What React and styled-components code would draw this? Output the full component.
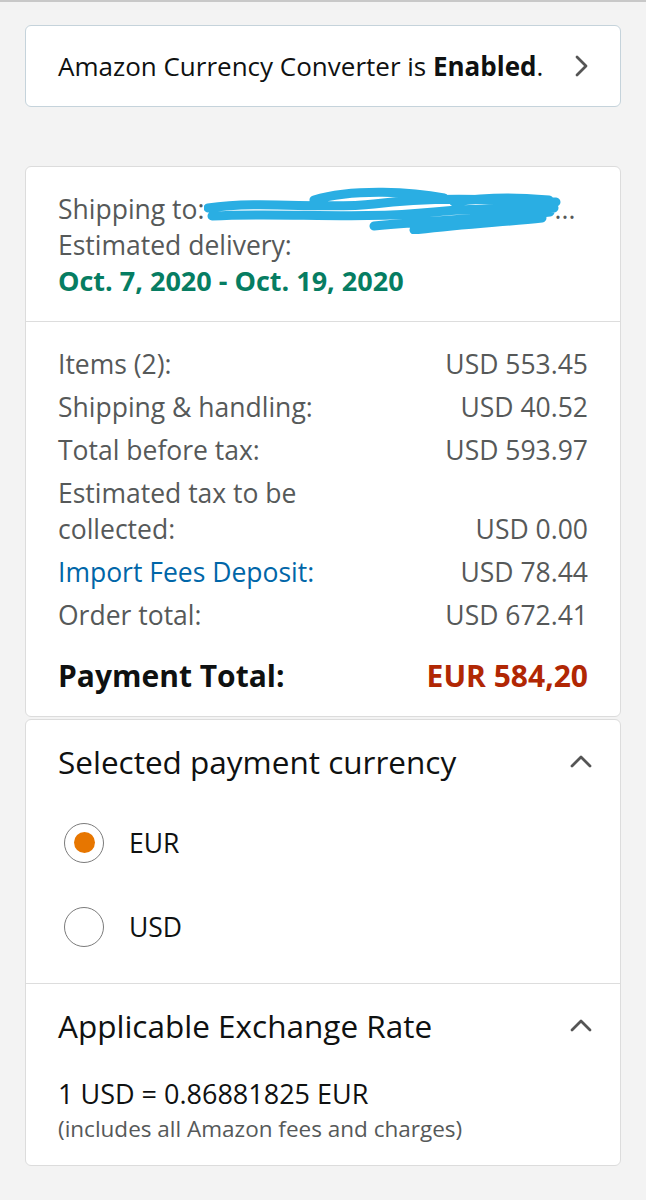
import React, { useState } from 'react';
import styled, { createGlobalStyle } from 'styled-components';

const GlobalStyle = createGlobalStyle`
  html, body {
    margin: 0;
    padding: 0;
    background: #f3f3f3;
  }
  body {
    font-family: "Open Sans", Roboto, Arial, sans-serif;
    color: #0f1111;
    -webkit-font-smoothing: antialiased;
  }
`;

const Page = styled.div`
  border-top: 2px solid #c8c8c8;
  padding: 23px 25px 34px;
  display: flex;
  flex-direction: column;
`;

const BannerCard = styled.div`
  background: #fff;
  border: 1.5px solid #c5d3db;
  border-radius: 6px;
  height: 82px;
  box-sizing: border-box;
  padding: 0 28px 0 32px;
  display: flex;
  align-items: center;
  justify-content: space-between;
  font-size: 26px;
  margin-bottom: 59px;
`;

const Card = styled.div`
  background: #fff;
  border: 1.5px solid #dcdcdc;
  border-radius: 6px;
  margin-bottom: ${(p) => p.$gap || 0}px;
`;

const Section = styled.div`
  padding: ${(p) => p.$pad || '0 32px'};
  border-top: ${(p) => (p.$divider ? '1.5px solid #dddddd' : 'none')};
`;

const GrayLine = styled.div`
  color: #565959;
  font-size: 26.5px;
  line-height: 35.5px;
  position: relative;
`;

const DeliveryDate = styled.div`
  color: #067d62;
  font-weight: 700;
  font-size: 27px;
  line-height: 35.5px;
`;

const Row = styled.div`
  display: flex;
  justify-content: space-between;
  align-items: flex-end;
  color: #565959;
  font-size: 26.5px;
  line-height: 36px;
  margin-bottom: 7px;
`;

const Label = styled.span`
  color: ${(p) => (p.$link ? '#0066a8' : 'inherit')};
  max-width: ${(p) => p.$narrow || 'none'};
`;

const Amount = styled.span`
  white-space: nowrap;
`;

const TotalRow = styled.div`
  display: flex;
  justify-content: space-between;
  align-items: center;
  font-size: 30px;
  line-height: 40px;
  font-weight: 700;
  margin-top: 23px;
  color: #0f1111;
`;

const TotalAmount = styled.span`
  color: #b12704;
`;

const Header = styled.div`
  display: flex;
  justify-content: space-between;
  align-items: center;
  font-size: 31.5px;
  line-height: 40px;
  color: #0f1111;
`;

const RadioList = styled.div`
  display: flex;
  flex-direction: column;
  gap: 42px;
  margin-top: 40px;
`;

const RadioRow = styled.label`
  display: flex;
  align-items: center;
  gap: 25px;
  font-size: 26.5px;
  color: #0f1111;
  height: 42px;
  margin-left: 6px;
  cursor: pointer;
`;

const RadioCircle = styled.span`
  width: 40px;
  height: 40px;
  border-radius: 50%;
  border: 1.5px solid #7b7b7b;
  box-sizing: border-box;
  display: flex;
  align-items: center;
  justify-content: center;
  &::after {
    content: '';
    width: 21px;
    height: 21px;
    border-radius: 50%;
    background: ${(p) => (p.$checked ? '#e77600' : 'transparent')};
  }
`;

const RateBlock = styled.div`
  margin-top: 31px;
`;

const RateLine = styled.div`
  font-size: 27px;
  color: #0f1111;
  line-height: 34px;
`;

const RateNote = styled.div`
  font-size: 22.5px;
  color: #565959;
  line-height: 36px;
`;

const Scribble = styled.svg`
  position: absolute;
  left: 146px;
  top: -6px;
`;

const Dots = styled.span`
  margin-left: 350px;
`;

const Chevron = ({ dir = 'right' }) => (
  <svg width="22" height="22" viewBox="0 0 22 22">
    <path
      d={dir === 'right' ? 'M7 2 L16 11 L7 20' : 'M2 15 L11 6 L20 15'}
      fill="none"
      stroke="#555"
      strokeWidth="2.8"
      strokeLinecap="round"
      strokeLinejoin="round"
    />
  </svg>
);

const rows = [
  { label: 'Items (2):', amount: 'USD 553.45' },
  { label: 'Shipping & handling:', amount: 'USD 40.52' },
  { label: 'Total before tax:', amount: 'USD 593.97' },
  { label: 'Estimated tax to be collected:', amount: 'USD 0.00', narrow: '270px' },
  { label: 'Import Fees Deposit:', amount: 'USD 78.44', link: true },
  { label: 'Order total:', amount: 'USD 672.41' },
];

export default function App() {
  const [currency, setCurrency] = useState('EUR');

  return (
    <>
      <GlobalStyle />
      <Page>
        <BannerCard>
          <span>
            Amazon Currency Converter is <b>Enabled</b>.
          </span>
          <Chevron dir="right" />
        </BannerCard>

        <Card $gap={2}>
          <Section $pad="25px 32px 22px">
            <GrayLine>
              Shipping to:
              <Scribble width="410" height="48" viewBox="0 0 410 48">
                <path
                  d="M4 22 C60 14 120 24 170 18 C230 10 300 14 352 16 M8 30 C80 26 150 34 230 26 C290 20 330 24 350 22 M110 14 C150 2 210 6 240 12 M170 40 C230 34 290 32 346 26 M210 44 C260 38 300 36 338 32 M250 16 C290 10 320 12 345 14"
                  fill="none"
                  stroke="#2aaee3"
                  strokeWidth="9"
                  strokeLinecap="round"
                />
              </Scribble>
              <Dots>...</Dots>
            </GrayLine>
            <GrayLine>Estimated delivery:</GrayLine>
            <DeliveryDate>Oct. 7, 2020 - Oct. 19, 2020</DeliveryDate>
          </Section>
          <Section $divider $pad="24px 32px 20px">
            {rows.map((r) => (
              <Row key={r.label}>
                <Label $link={r.link} $narrow={r.narrow}>
                  {r.label}
                </Label>
                <Amount>{r.amount}</Amount>
              </Row>
            ))}
            <TotalRow>
              <span>Payment Total:</span>
              <TotalAmount>EUR 584,20</TotalAmount>
            </TotalRow>
          </Section>
        </Card>

        <Card>
          <Section $pad="22px 28px 35px 32px">
            <Header>
              <span>Selected payment currency</span>
              <Chevron dir="up" />
            </Header>
            <RadioList>
              {['EUR', 'USD'].map((c) => (
                <RadioRow key={c} onClick={() => setCurrency(c)}>
                  <RadioCircle $checked={currency === c} />
                  {c}
                </RadioRow>
              ))}
            </RadioList>
          </Section>
          <Section $divider $pad="22px 28px 18px 32px">
            <Header>
              <span>Applicable Exchange Rate</span>
              <Chevron dir="up" />
            </Header>
            <RateBlock>
              <RateLine>1 USD = 0.86881825 EUR</RateLine>
              <RateNote>(includes all Amazon fees and charges)</RateNote>
            </RateBlock>
          </Section>
        </Card>
      </Page>
    </>
  );
}
